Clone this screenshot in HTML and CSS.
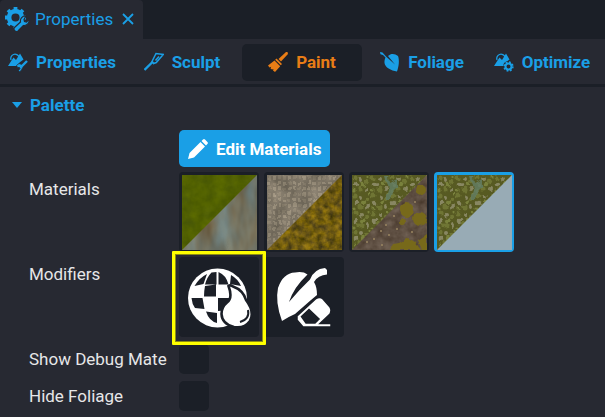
FILE: index.html
```html
<!DOCTYPE html>
<html lang="en">
<head>
<meta charset="utf-8">
<title>Properties</title>
<link rel="stylesheet" href="styles.css">
</head>
<body>
<svg class="defs" aria-hidden="true">
  <defs>
    <clipPath id="lower"><path d="M75 0V75H0Z"/></clipPath>
    <filter id="grass" x="0" y="0" width="1" height="1" color-interpolation-filters="sRGB">
      <feTurbulence type="fractalNoise" baseFrequency=".09" numOctaves="4" seed="4"/>
      <feColorMatrix values=".12 0 0 0 .26  .12 0 0 0 .32  0 .05 0 0 -.02  0 0 0 0 1"/>
    </filter>
    <filter id="rock" x="0" y="0" width="1" height="1" color-interpolation-filters="sRGB">
      <feTurbulence type="fractalNoise" baseFrequency=".06 .022" numOctaves="3" seed="8"/>
      <feColorMatrix values=".2 .15 0 0 .28  .05 .3 0 0 .28  -.1 .4 0 0 .24  0 0 0 0 1"/>
    </filter>
    <filter id="moss" x="0" y="0" width="1" height="1" color-interpolation-filters="sRGB">
      <feTurbulence type="fractalNoise" baseFrequency=".16" numOctaves="3" seed="12"/>
      <feColorMatrix values=".5 0 0 0 .18  .38 0 0 0 .16  0 .15 0 0 -.01  0 0 0 0 1"/>
    </filter>
    <filter id="soil" x="0" y="0" width="1" height="1" color-interpolation-filters="sRGB">
      <feTurbulence type="fractalNoise" baseFrequency=".12" numOctaves="3" seed="5"/>
      <feColorMatrix values=".2 0 0 0 .27  .2 0 0 0 .21  .2 0 0 0 .16  0 0 0 0 1"/>
    </filter>
    <filter id="haze" x="0" y="0" width="1" height="1" color-interpolation-filters="sRGB">
      <feTurbulence type="fractalNoise" baseFrequency=".07" numOctaves="3" seed="3"/>
      <feColorMatrix values=".6 0 0 0 .2  .55 0 0 0 .19  .5 0 0 0 .15  0 0 0 0 .4"/>
    </filter>
    <filter id="warp" x="0" y="0" width="1" height="1" color-interpolation-filters="sRGB">
      <feTurbulence type="fractalNoise" baseFrequency=".12" numOctaves="2" seed="6" result="n"/>
      <feDisplacementMap in="SourceGraphic" in2="n" scale="7" xChannelSelector="R" yChannelSelector="G"/>
      <feGaussianBlur stdDeviation=".6"/>
    </filter>
    <filter id="rough" x="0" y="0" width="1" height="1" color-interpolation-filters="sRGB">
      <feTurbulence type="fractalNoise" baseFrequency=".15" numOctaves="2" seed="9" result="n"/>
      <feDisplacementMap in="SourceGraphic" in2="n" scale="4" xChannelSelector="R" yChannelSelector="G"/>
      <feGaussianBlur stdDeviation=".5"/>
    </filter>
    <pattern id="cobbles" width="15" height="17" patternUnits="userSpaceOnUse">
      <path fill="#766e60" d="M0 0H15V17H0Z"/>
      <path fill="#8c8270" d="M1 1H4V5H1ZM11 0H14V4H11ZM6 7H9V10H6ZM0 12H4V15H0Z"/>
      <path fill="#a09581" d="M6 1H9V5H6ZM1 7H4V10H1ZM11 6H14V9H11ZM6 12H9V16H6ZM11 11H14V15H11Z"/>
    </pattern>
    <pattern id="pebbles" width="19" height="18" patternUnits="userSpaceOnUse">
      <path fill="#575a22" d="M0 0H19V18H0Z"/>
      <g fill="#6f7534"><circle cx="3" cy="3" r="2.500"/><circle cx="15" cy="6" r="2.200"/><circle cx="8" cy="14" r="2.500"/></g>
      <g fill="#888762"><circle cx="9" cy="4" r="2"/><circle cx="4" cy="10" r="2.300"/><circle cx="15" cy="14" r="2"/></g>
      <g fill="#79813c"><circle cx="11" cy="9" r="2.200"/><circle cx="2" cy="16" r="1.600"/><circle cx="17" cy="1" r="1.500"/></g>
    </pattern>
    <symbol id="stones" viewBox="0 0 75 75">
      <g filter="url(#warp)">
        <path fill="url(#pebbles)" d="M-10-10H90V90H-10Z"/>
        <path fill="#637c62" opacity=".85" d="M33 0h4l1 9 8-4v7l-5 5-2 8h-5l3-10z"/>
      </g>
    </symbol>
    <symbol id="mountains" viewBox="0 0 20 20">
      <path fill="none" stroke="currentColor" stroke-width="1.300" d="M3 8a4.200 4.200 0 1 1 8-3"/>
      <path fill="currentColor" d="M0 14 3.500 8.500 5.500 5.500 8 8 12 1.500 15.500 7.500 11.500 10.500 9 14Z"/>
    </symbol>
  </defs>
</svg>

<header class="tabs">
  <div class="tab">
    <svg class="tab-icon" viewBox="0 0 24 24" aria-hidden="true">
      <circle cx="10.500" cy="10.500" r="6.400" fill="none" stroke="currentColor" stroke-width="4.600"/>
      <path stroke="currentColor" stroke-width="3.800" d="M10.500 0V4M10.500 17V21M0 10.500H4M17 10.500H21M3 3 6 6M15 6 18 3M3 18 6 15"/>
      <path fill="currentColor" stroke="#272932" stroke-width="1.200" d="M9.500 20.500 15.500 15a5 5 0 0 1 5.500-6l-2 3.500.5 2 2 .5L24 12.500a5 5 0 0 1-5.500 6L13.500 23.500a2.300 2.300 0 0 1-4-3Z"/>
    </svg>
    <span>Properties</span>
    <button class="close" type="button" aria-label="Close tab">
      <svg viewBox="0 0 12 12"><path fill="none" stroke="currentColor" stroke-width="1.800" d="m1 1 10 10M11 1 1 11"/></svg>
    </button>
  </div>
</header>

<nav class="modes">
  <button class="mode" type="button">
    <svg viewBox="0 0 20 20"><use href="#mountains"/><path fill="currentColor" stroke="#272932" stroke-width=".8" d="M8.500 13.500 11 11.500 14 12.500 15 15 13.500 18 11.500 20 10.500 18.500 12 16.500 11.500 15.500 9.500 15.500Z"/><path fill="none" stroke="currentColor" stroke-width="2.400" d="m13 15 6-6"/></svg>
    <span>Properties</span>
  </button>
  <button class="mode" type="button">
    <svg viewBox="0 0 20 20"><path fill="none" stroke="currentColor" stroke-width="1.500" d="m8 9.500 4-8 7.300 1-7 8L9.500 11.500 8 9.500Zm3.500-1L15 4.500"/><path fill="none" stroke="currentColor" stroke-width="2.300" d="m.5 18 8.500-8.500"/></svg>
    <span>Sculpt</span>
  </button>
  <button class="mode active" type="button">
    <svg viewBox="0 0 20 20"><path fill="currentColor" d="m18 0 1.500 0 .5 2-7 7.500-2.500-2.500Z"/><path fill="currentColor" d="m8.500 6.500 5.500 5.500-1.200 1.200L7.200 7.700ZM6.500 8.500l5.700 5.700L7 20l-2-1.500.5-1.500-1.500.5-1.500-1 .7-1.700-1.700.7L0 13.500Z"/></svg>
    <span>Paint</span>
  </button>
  <button class="mode" type="button">
    <svg viewBox="0 0 20 20"><path fill="currentColor" d="M0 0 2.500.5 6 4.500l9 8L8 4C11 1 15 1.500 18 4c1.500 4 1 10-1 15.500C11 18.500 5 15.500 4.500 11c-.2-2 .3-4 1-5.500L3 3 .5 2.200Z"/></svg>
    <span>Foliage</span>
  </button>
  <button class="mode" type="button">
    <svg viewBox="0 0 20 20"><use href="#mountains"/><circle cx="14.500" cy="14.500" r="5.500" fill="#272932"/><circle cx="14.500" cy="14.500" r="3" fill="none" stroke="currentColor" stroke-width="2"/><circle cx="14.500" cy="14.500" r="4.400" fill="none" stroke="currentColor" stroke-width="1.600" stroke-dasharray="1.800 1.656"/></svg>
    <span>Optimize</span>
  </button>
</nav>

<main class="panel">
  <button class="section" type="button" aria-expanded="true">
    <svg viewBox="0 0 10 6"><path fill="currentColor" d="M0 0H10L5 6Z"/></svg>
    <span>Palette</span>
  </button>

  <div class="rows">
    <div class="row edit-row">
      <button class="edit" type="button">
        <svg viewBox="0 0 20 20"><path fill="#fff" d="M0 20 1.500 14 12.500 3 17 7.500 6 18.500ZM13.500 2 15 .6q1-1 2 0L19.400 3q1 1 0 2L18 6.500Z"/></svg>
        <span>Edit Materials</span>
      </button>
    </div>
    <div class="row">
      <span class="label" id="materials">Materials</span>
      <div class="tiles" role="group" aria-labelledby="materials">
        <button class="tile" type="button" aria-label="Grass and rock">
          <svg viewBox="0 0 75 75">
            <path d="M0 0H75V75H0Z" filter="url(#grass)"/>
            <g clip-path="url(#lower)"><path d="M0 0H75V75H0Z" filter="url(#rock)"/></g>
          </svg>
        </button>
        <button class="tile" type="button" aria-label="Cobblestone and moss">
          <svg viewBox="0 0 75 75">
            <path fill="url(#cobbles)" d="M-5-5H80V80H-5Z" filter="url(#rough)"/>
            <path d="M0 0H75V75H0Z" filter="url(#haze)"/>
            <g clip-path="url(#lower)"><path d="M0 0H75V75H0Z" filter="url(#moss)"/></g>
          </svg>
        </button>
        <button class="tile" type="button" aria-label="Pebbles and soil">
          <svg viewBox="0 0 75 75">
            <use href="#stones" width="75" height="75"/>
            <g clip-path="url(#lower)">
              <path d="M0 0H75V75H0Z" filter="url(#soil)"/>
              <g fill="#77691a" filter="url(#rough)"><circle cx="55" cy="35" r="7"/><circle cx="68" cy="44" r="7"/><circle cx="69" cy="15" r="5"/><circle cx="51" cy="47" r="3"/><path d="m38 75 3-6 7-1 8-5 7 4 6 8ZM66 65l9-6v16h-5Z"/></g>
              <g fill="#9a8662"><circle cx="15" cy="67" r="1"/><circle cx="22" cy="64" r="1"/><circle cx="29" cy="56" r="1"/><circle cx="37" cy="60" r="1"/><circle cx="34" cy="50" r="1"/><circle cx="42" cy="41" r="1"/><circle cx="45" cy="54" r="1"/><circle cx="63" cy="27" r="1"/><circle cx="30" cy="70" r="1"/><circle cx="60" cy="57" r="1"/></g>
            </g>
          </svg>
        </button>
        <button class="tile selected" type="button" aria-pressed="true" aria-label="Pebbles and plain">
          <svg viewBox="0 0 75 75">
            <use href="#stones" width="75" height="75"/>
            <path fill="#98abb5" d="M75 0V75H0Z"/>
          </svg>
        </button>
      </div>
    </div>
    <div class="row">
      <span class="label" id="modifiers">Modifiers</span>
      <div class="tiles" role="group" aria-labelledby="modifiers">
        <button class="tile highlighted" type="button" aria-label="Paint droplet">
          <svg viewBox="0 0 75 75">
            <circle cx="35.500" cy="38" r="29.500" fill="#fff"/>
            <path fill="#1b1f27" d="M34.500 12V24.500H23Q25 17 29.500 12.500ZM12.500 26Q17 18 25 14L21.500 24ZM36.500 12Q44 15 46.500 24.500H36.500ZM49 15Q56 19 59 26L48 24ZM23 26 34 24.500V36.500H22Q22 31 23 26ZM36 38H49V50L36 51ZM9.500 38H20.500L22.500 49 13 48Q10 44 9.500 38ZM24 51.500 35 53V63Q27 61 24 51.500Z"/>
            <path fill="#fff" stroke="#1b1f27" stroke-width="2.600" d="M46.500 26Q48 24.500 51 26.500Q61 30 64 40Q73 52 68 61Q62 69 52 67Q40 64 39.500 54Q39.500 47 45 42.500Q51 38 46.500 26Z"/>
            <path fill="none" stroke="#1b1f27" stroke-width="2" d="M66 50Q68 59 58 62"/>
          </svg>
        </button>
        <button class="tile" type="button" aria-label="Erase foliage">
          <svg viewBox="0 0 75 75">
            <path fill="#fff" d="M15 61Q8 42 11 28Q16 13 28 12.500Q36 11 40.500 14.500Q27 27 22 42Q32 30 43 19.500Q47 9 58 8L60 10V14.500Q51 15 47 22Q50 27 50 35L44 40 28 54Q21 57 15 61Z"/>
            <path fill="#fff" fill-rule="evenodd" stroke="#1b1f27" stroke-width="1.500" d="M30 56 49 38.500Q53 36 56 39L63 47Q65 50 63 54L53 63.500H64V67H36L30 60ZM42 49.500 34.500 56.500 39 63H48L52 59Z"/>
          </svg>
        </button>
      </div>
    </div>
    <div class="row check-row">
      <label class="label" for="debug">Show Debug Mate</label>
      <input class="check" type="checkbox" id="debug">
    </div>
    <div class="row check-row">
      <label class="label" for="hide">Hide Foliage</label>
      <input class="check" type="checkbox" id="hide">
    </div>
  </div>
</main>
</body>
</html>
```
FILE: styles.css
```css
:root {
  --bg: #272932;
  --dark: #1b1f27;
  --blue: #1a9fe6;
  --orange: #e87d16;
  --highlight: #ffff00;
}

* { box-sizing: border-box; }

body {
  margin: 0;
  background: var(--bg);
  color: #e6e6e8;
  font: 17px/34px Roboto, "Liberation Sans", sans-serif;
}

button {
  margin: 0;
  padding: 0;
  border: 0;
  background: none;
  color: inherit;
  font: inherit;
}

svg { display: block; flex: none; }
.defs { position: absolute; width: 0; height: 0; }

.tabs { display: flex; height: 39px; background: var(--dark); }
.tab {
  display: flex;
  align-items: center;
  width: 143px;
  padding: 0 0 2px 5px;
  border-radius: 4px 4px 0 0;
  background: var(--bg);
  color: var(--blue);
}
.tab-icon { width: 24px; height: 24px; margin-right: 6px; }
.close { margin-left: 9px; }
.close svg { width: 12px; height: 12px; }

.modes {
  display: grid;
  grid-template-columns: repeat(5, 1fr);
  padding: 5px 3px 3px 2px;
  border-bottom: 3px solid var(--dark);
  color: var(--blue);
  font-weight: 700;
}
.mode {
  display: flex;
  align-items: center;
  justify-content: center;
  gap: 8px;
  height: 37px;
  padding-bottom: 2px;
  border-radius: 5px;
}
.mode svg { width: 20px; height: 20px; }
.mode.active { background: var(--dark); color: var(--orange); }

.section {
  display: flex;
  align-items: center;
  gap: 8px;
  height: 36px;
  padding-left: 12px;
  color: var(--blue);
  font-weight: 700;
}
.section svg { width: 10px; height: 6px; }

.rows {
  display: flex;
  flex-direction: column;
  gap: 5px;
  padding: 7px 0 6px 29px;
}
.row {
  display: grid;
  grid-template-columns: 150px 1fr;
  align-items: start;
}
.label { white-space: nowrap; }

.edit {
  display: flex;
  align-items: center;
  gap: 8px;
  grid-column: 2;
  justify-self: start;
  height: 37px;
  padding: 0 9px;
  border-radius: 5px;
  background: var(--blue);
  color: #fff;
  font-weight: 700;
}
.edit svg { width: 20px; height: 20px; }

.tiles { display: flex; gap: 5px; }
.tile {
  position: relative;
  width: 80px;
  height: 80px;
  padding: 3px 2px 2px 3px;
  border-radius: 4px;
  background: var(--dark);
}
.tile svg { width: 75px; height: 75px; }
.tile.selected { background: var(--blue); }
.tile.highlighted::after {
  content: "";
  position: absolute;
  z-index: 1;
  inset: -6px -7px -8px;
  border: 3px solid var(--highlight);
  border-radius: 1px;
  outline: 1px solid #8b8b14;
  outline-offset: -4px;
}

.check-row { padding-top: 2px; align-items: center; }
.check-row .label { line-height: 30px; }
.check {
  appearance: none;
  width: 30px;
  height: 30px;
  margin: 0;
  border-radius: 5px;
  background: var(--dark);
}
.check:checked { background: var(--blue); }
```
